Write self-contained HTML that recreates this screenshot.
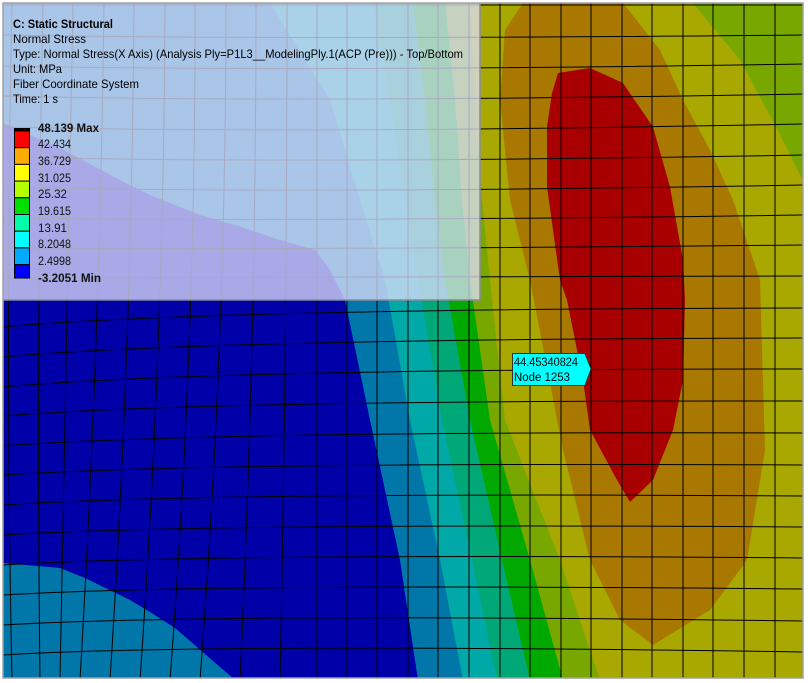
<!DOCTYPE html>
<html><head><meta charset="utf-8"><style>
html,body{margin:0;padding:0;background:#fff;width:808px;height:683px;overflow:hidden}
svg{display:block}
text{font-family:"Liberation Sans","DejaVu Sans",sans-serif}
</style></head><body>
<svg width="808" height="683" viewBox="0 0 808 683" xmlns="http://www.w3.org/2000/svg">
<defs><clipPath id="c"><rect x="3" y="3" width="800" height="675"/></clipPath></defs>
<rect width="808" height="683" fill="#fff"/>
<g clip-path="url(#c)">
<rect x="3" y="3" width="800" height="675" fill="#0000a8"/>
<polygon points="3,3 240,3 300,100 340,200 345,300 330,270 315,250 280,240 235,225 200,215 150,195 120,180 60,148 3,123" fill="#0077a8"/>
<polygon points="235,3 300,100 335,200 345,300 370,420 400,560 418,680 805,680 805,3" fill="#0077a8"/>
<polygon points="270,3 330,100 360,200 385,280 410,420 440,560 463,680 805,680 805,3" fill="#00a8a8"/>
<polygon points="373,3 390,100 405,200 418,280 442,420 472,560 497,680 805,680 805,3" fill="#00a878"/>
<polygon points="413,3 425,100 435,200 445,280 470,420 502,560 530,680 805,680 805,3" fill="#00a800"/>
<polygon points="445,3 455,100 462,200 470,280 490,420 530,560 563,680 805,680 805,3" fill="#78a800"/>
<polygon points="470,3 475,100 482,200 490,280 505,420 560,560 600,680 805,680 805,3" fill="#a8a800"/>
<polygon points="693,3 805,3 805,185 775,125 740,60" fill="#78a800"/>
<polygon points="523,3 623,3 660,50 683,100 710,150 733,200 760,280 765,450 747,560 710,610 653,645 620,620 590,560 563,450 530,280 510,200 500,100 505,30" fill="#a87800"/>
<polygon points="590,68 623,83 653,127 670,187 683,260 685,300 683,380 673,430 653,480 630,502 617,480 590,430 583,380 567,300 560,280 553,230 547,187 547,127 552,93 558,73" fill="#a80000"/>
<polygon points="3,563 60,568 85,578 130,600 150,612 175,628 235,680 3,680" fill="#0077a8"/>
<g stroke="#000" stroke-width="1" fill="none">
<path d="M12,3 Q5,340 12,680M43,3 Q36,340 40,680M73,3 Q68,340 60,680M104,3 Q100,340 80,680M134,3 Q132,340 110,680M165,3 Q164,340 140,680M195,3 Q196,340 170,680M226,3 Q226,340 200,680M256,3 Q256,340 240,680M287,3 Q287,340 280,680M317,3 L317,680M347,3 L347,680M377,3 L377,680M408,3 L408,680M438,3 L438,680M469,3 L469,680M500,3 L500,680M530,3 L530,680M561,3 L561,680M591,3 L591,680M622,3 L622,680M652,3 L652,680M683,3 L683,680M713,3 L713,680M744,3 L744,680M775,3 L775,680"/>
<path d="M3,5 L805,5M3,35 Q300,40 805,35M3,66 Q300,72 805,64M3,96 Q300,103 805,94M3,127 Q300,134 805,124M3,157 Q300,164 805,155M3,187 Q300,194 805,185M3,218 Q300,222 805,215M3,248 Q300,250 805,245M3,278 Q300,279 805,276M3,327 Q200,309 805,308M3,357 Q200,339 805,338M3,387 Q200,369 805,369M3,416 Q200,400 805,401M3,446 Q200,431 805,433M3,475 Q200,462 805,465M3,505 Q200,492 805,496M3,535 Q200,523 805,527M3,565 Q200,553 805,558M3,595 Q200,583 805,589M3,625 Q200,613 805,621M3,655 Q200,643 805,652"/>
</g>
<rect x="3" y="3" width="477" height="297" fill="rgba(222,222,252,0.76)"/>
<path d="M480,3 L480,300 L3,300" stroke="#8a8a9a" stroke-width="1.5" fill="none"/>
</g>
<rect x="3" y="3" width="800" height="675" fill="none" stroke="#a0a0a0" stroke-width="1.5"/>
<g font-size="12" fill="#000">
<text x="13" y="28" font-weight="bold" textLength="100" lengthAdjust="spacingAndGlyphs">C: Static Structural</text>
<text x="13" y="43" textLength="73" lengthAdjust="spacingAndGlyphs">Normal Stress</text>
<text x="13" y="58" textLength="450" lengthAdjust="spacingAndGlyphs">Type: Normal Stress(X Axis) (Analysis Ply=P1L3__ModelingPly.1(ACP (Pre))) - Top/Bottom</text>
<text x="13" y="73" textLength="49" lengthAdjust="spacingAndGlyphs">Unit: MPa</text>
<text x="13" y="88" textLength="126" lengthAdjust="spacingAndGlyphs">Fiber Coordinate System</text>
<text x="13" y="103" textLength="45" lengthAdjust="spacingAndGlyphs">Time: 1 s</text>
</g>
<g stroke="#000" stroke-width="1">
<rect x="14.5" y="128.5" width="15" height="3" fill="#000"/>
<rect x="14.5" y="131" width="15" height="16.7" fill="#ff0000"/>
<rect x="14.5" y="147.7" width="15" height="16.7" fill="#ffaa00"/>
<rect x="14.5" y="164.4" width="15" height="16.7" fill="#ffff00"/>
<rect x="14.5" y="181.1" width="15" height="16.7" fill="#b4ff00"/>
<rect x="14.5" y="197.8" width="15" height="16.7" fill="#00e000"/>
<rect x="14.5" y="214.5" width="15" height="16.7" fill="#00ffaa"/>
<rect x="14.5" y="231.2" width="15" height="16.7" fill="#00ffff"/>
<rect x="14.5" y="247.9" width="15" height="16.7" fill="#00aaff"/>
<rect x="14.5" y="264.6" width="15" height="13.4" fill="#0000ff"/>
</g>
<g font-size="12" fill="#111">
<text x="38" y="132" font-weight="bold" textLength="61" lengthAdjust="spacingAndGlyphs">48.139 Max</text>
<text x="38" y="148" textLength="33" lengthAdjust="spacingAndGlyphs">42.434</text>
<text x="38" y="165" textLength="33" lengthAdjust="spacingAndGlyphs">36.729</text>
<text x="38" y="182" textLength="33" lengthAdjust="spacingAndGlyphs">31.025</text>
<text x="38" y="198" textLength="29" lengthAdjust="spacingAndGlyphs">25.32</text>
<text x="38" y="215" textLength="33" lengthAdjust="spacingAndGlyphs">19.615</text>
<text x="38" y="232" textLength="29" lengthAdjust="spacingAndGlyphs">13.91</text>
<text x="38" y="248" textLength="33" lengthAdjust="spacingAndGlyphs">8.2048</text>
<text x="38" y="265" textLength="33" lengthAdjust="spacingAndGlyphs">2.4998</text>
<text x="38" y="282" font-weight="bold" textLength="63" lengthAdjust="spacingAndGlyphs">-3.2051 Min</text>
</g>
<polygon points="512.5,353.5 585,353.5 591,369 585,385.5 512.5,385.5" fill="#00ffff" stroke="#333" stroke-width="1"/>
<text x="514" y="366" font-size="11.5" fill="#000" textLength="64" lengthAdjust="spacingAndGlyphs">44.45340824</text>
<text x="514" y="381" font-size="11.5" fill="#000" textLength="56" lengthAdjust="spacingAndGlyphs">Node 1253</text>
</svg>
</body></html>
